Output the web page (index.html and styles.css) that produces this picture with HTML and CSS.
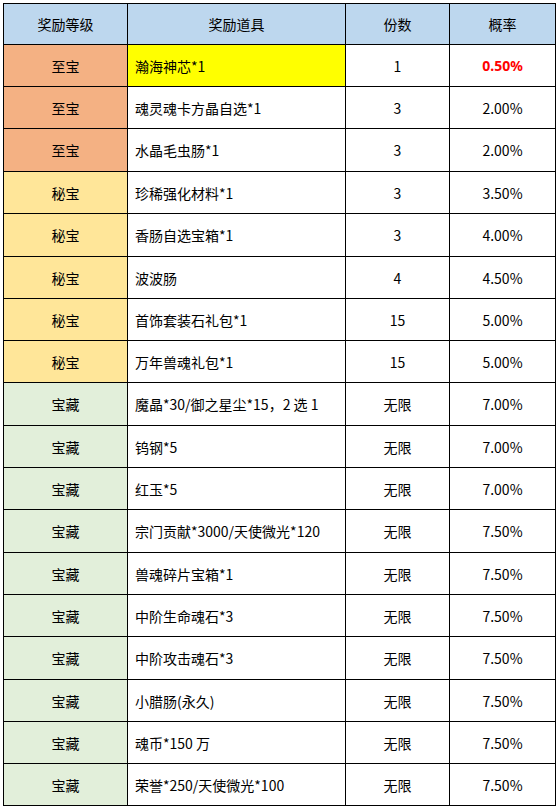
FILE: index.html
```html
<!DOCTYPE html>
<html lang="zh">
<head>
<meta charset="utf-8">
<link rel="stylesheet" href="styles.css">
</head>
<body>
<table class="rewards">
  <colgroup>
    <col class="c1"><col class="c2"><col class="c3"><col class="c4">
  </colgroup>
  <thead>
    <tr class="head"><th>奖励等级</th><th>奖励道具</th><th>份数</th><th>概率</th></tr>
  </thead>
  <tbody>
    <tr class="r42"><td class="lv top">至宝</td><td class="item hl">瀚海神芯*1</td><td>1</td><td class="red">0.50%</td></tr>
    <tr class="r42"><td class="lv top">至宝</td><td class="item">魂灵魂卡方晶自选*1</td><td>3</td><td>2.00%</td></tr>
    <tr class="r43"><td class="lv top">至宝</td><td class="item">水晶毛虫肠*1</td><td>3</td><td>2.00%</td></tr>
    <tr class="r42"><td class="lv sec">秘宝</td><td class="item">珍稀强化材料*1</td><td>3</td><td>3.50%</td></tr>
    <tr class="r43"><td class="lv sec">秘宝</td><td class="item">香肠自选宝箱*1</td><td>3</td><td>4.00%</td></tr>
    <tr class="r42"><td class="lv sec">秘宝</td><td class="item">波波肠</td><td>4</td><td>4.50%</td></tr>
    <tr class="r42"><td class="lv sec">秘宝</td><td class="item">首饰套装石礼包*1</td><td>15</td><td>5.00%</td></tr>
    <tr class="r42"><td class="lv sec">秘宝</td><td class="item">万年兽魂礼包*1</td><td>15</td><td>5.00%</td></tr>
    <tr class="r43"><td class="lv tre">宝藏</td><td class="item">魔晶*30/御之星尘*15，2 选 1</td><td>无限</td><td>7.00%</td></tr>
    <tr class="r42"><td class="lv tre">宝藏</td><td class="item">钨钢*5</td><td>无限</td><td>7.00%</td></tr>
    <tr class="r42"><td class="lv tre">宝藏</td><td class="item">红玉*5</td><td>无限</td><td>7.00%</td></tr>
    <tr class="r43"><td class="lv tre">宝藏</td><td class="item">宗门贡献*3000/天使微光*120</td><td>无限</td><td>7.50%</td></tr>
    <tr class="r42"><td class="lv tre">宝藏</td><td class="item">兽魂碎片宝箱*1</td><td>无限</td><td>7.50%</td></tr>
    <tr class="r42"><td class="lv tre">宝藏</td><td class="item">中阶生命魂石*3</td><td>无限</td><td>7.50%</td></tr>
    <tr class="r43"><td class="lv tre">宝藏</td><td class="item">中阶攻击魂石*3</td><td>无限</td><td>7.50%</td></tr>
    <tr class="r42"><td class="lv tre">宝藏</td><td class="item">小腊肠(永久)</td><td>无限</td><td>7.50%</td></tr>
    <tr class="r42"><td class="lv tre">宝藏</td><td class="item">魂币*150 万</td><td>无限</td><td>7.50%</td></tr>
    <tr class="r42"><td class="lv tre">宝藏</td><td class="item">荣誉*250/天使微光*100</td><td>无限</td><td>7.50%</td></tr>
  </tbody>
</table>
</body>
</html>
```
FILE: styles.css
```css
html, body {
  margin: 0;
  padding: 0;
  background: #ffffff;
}
body {
  padding: 3px 0 0 3px;
  font-family: "Noto Sans CJK SC", "Noto Sans", sans-serif;
  font-size: 14px;
  color: #000000;
}
.rewards {
  border-collapse: collapse;
  table-layout: fixed;
  width: 552px;
}
.c1 { width: 124px; }
.c2 { width: 218px; }
.c3 { width: 104px; }
.c4 { width: 106px; }
.rewards th, .rewards td {
  border: 1px solid #000000;
  padding: 0;
  text-align: center;
  vertical-align: middle;
  font-weight: normal;
  line-height: 18px;
  white-space: nowrap;
}
.head { height: 41px; }
.head th { background: #bdd7ee; }
.r42 { height: 42px; }
.r43 { height: 43px; }
.rewards td.item {
  text-align: left;
  padding-left: 7px;
}
.top { background: #f4b183; }
.sec { background: #ffe699; }
.tre { background: #e2efda; }
.hl { background: #ffff00; }
.rewards td.red {
  color: #ff0000;
  font-family: "Noto Sans", "Open Sans", sans-serif;
  font-weight: 700;
}
```
